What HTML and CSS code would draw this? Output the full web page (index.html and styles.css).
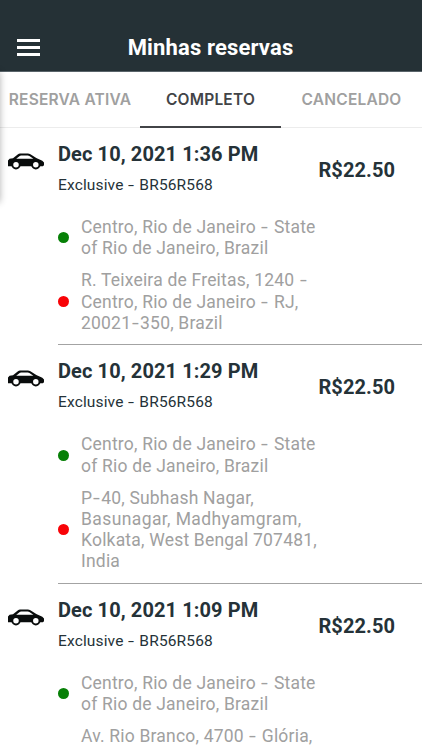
FILE: index.html
```html
<!DOCTYPE html>
<html lang="pt-BR">
<head>
<meta charset="utf-8">
<meta name="viewport" content="width=device-width, initial-scale=1">
<title>Minhas reservas</title>
<link rel="stylesheet" href="styles.css">
</head>
<body>
<svg class="defs" width="0" height="0" aria-hidden="true">
  <symbol id="car" viewBox="0 0 36 17">
    <path d="M0 13.2V7.6L1.6 5.8L5 5.2L10 1.3Q10.8 .6 12 .6H19.8Q21.2 .6 22.4 1.2L28.3 5L34.3 7.7L36 9.6V12.2L34.8 13.2Z" fill="#090c0c"/>
    <path d="M8.2 5.7L11.7 3Q12.3 2.5 13 2.5H19.8Q20.6 2.5 21.4 2.9L25.4 5.7Z" fill="#fff"/>
    <circle cx="8" cy="11.8" r="3.7" fill="#fff" stroke="#090c0c" stroke-width="1.9"/>
    <circle cx="27.8" cy="11.8" r="3.7" fill="#fff" stroke="#090c0c" stroke-width="1.9"/>
  </symbol>
</svg>
<main class="screen">
  <header class="header">
    <button class="menu" aria-label="Menu"><i></i><i></i><i></i></button>
    <h1 class="title">Minhas reservas</h1>
  </header>
  <nav class="tabs">
    <a class="tab">RESERVA ATIVA</a>
    <a class="tab active">COMPLETO</a>
    <a class="tab">CANCELADO</a>
  </nav>
  <section class="list">
    <article class="ride">
      <svg class="car"><use href="#car"/></svg>
      <div class="body">
        <div class="summary">
          <div><h2 class="date">Dec 10, 2021 1:36 PM</h2><p class="plate">Exclusive <span class="dash">-</span> BR56R568</p></div>
          <strong class="price">R$22.50</strong>
        </div>
        <div class="stop"><span class="dot from"></span><p class="address">Centro, Rio de Janeiro <span class="dash">-</span> State<br>of Rio de Janeiro, Brazil</p></div>
        <div class="stop"><span class="dot to"></span><p class="address">R. Teixeira de Freitas, 1240 <span class="dash">-</span><br>Centro, Rio de Janeiro <span class="dash">-</span> RJ,<br>20021<span class="dash">-</span>350, Brazil</p></div>
      </div>
    </article>
    <article class="ride">
      <svg class="car"><use href="#car"/></svg>
      <div class="body">
        <div class="summary">
          <div><h2 class="date">Dec 10, 2021 1:29 PM</h2><p class="plate">Exclusive <span class="dash">-</span> BR56R568</p></div>
          <strong class="price">R$22.50</strong>
        </div>
        <div class="stop"><span class="dot from"></span><p class="address">Centro, Rio de Janeiro <span class="dash">-</span> State<br>of Rio de Janeiro, Brazil</p></div>
        <div class="stop"><span class="dot to"></span><p class="address">P<span class="dash">-</span>40, Subhash Nagar,<br><span class="wide">Basunagar, Madhyamgram,</span><br>Kolkata, West Bengal 707481,<br>India</p></div>
      </div>
    </article>
    <article class="ride">
      <svg class="car"><use href="#car"/></svg>
      <div class="body">
        <div class="summary">
          <div><h2 class="date">Dec 10, 2021 1:09 PM</h2><p class="plate">Exclusive <span class="dash">-</span> BR56R568</p></div>
          <strong class="price">R$22.50</strong>
        </div>
        <div class="stop"><span class="dot from"></span><p class="address">Centro, Rio de Janeiro <span class="dash">-</span> State<br>of Rio de Janeiro, Brazil</p></div>
        <div class="stop last"><p class="address">Av. Rio Branco, 4700 <span class="dash">-</span> Glória,</p></div>
      </div>
    </article>
  </section>
  <div class="drawer-edge"></div>
</main>
</body>
</html>
```
FILE: styles.css
```css
* { box-sizing: border-box; margin: 0; padding: 0; }
body { background: #fff; font-family: Roboto, "Liberation Sans", sans-serif; color: #253238; }
.defs { position: absolute; }
.screen { position: relative; width: 422px; height: 750px; overflow: hidden; background: #fff; }
.header { height: 72px; background: #253136; display: grid; grid-template-columns: 60px 1fr 61px; align-items: start; padding-top: 32px; border-bottom: 1px solid #59646a; }
.menu { border: 0; background: none; display: flex; flex-direction: column; gap: 4px; padding: 7px 0 0 17px; }
.menu i { display: block; width: 23px; height: 3px; background: #fff; }
.title { color: #fff; font-size: 22px; line-height: 32px; font-weight: 700; text-align: center; white-space: nowrap; letter-spacing: .15px; }
.tabs { height: 56px; display: grid; grid-template-columns: 140px 141px 141px; border-bottom: 1px solid #ececec; }
.tab { font: 600 15.5px/56px Inter, sans-serif; text-align: center; color: #a0a0a0; height: 56px; white-space: nowrap; letter-spacing: .2px; }
.tab.active { color: #424447; border-bottom: 2px solid #424447; }
.ride { display: grid; grid-template-columns: 50px 1fr; padding-left: 8px; }
.car { width: 36px; height: 17px; margin-top: 25px; }
.body { border-bottom: 1px solid #a3a3a3; padding-bottom: 10.4px; }
.summary { height: 89px; display: flex; justify-content: space-between; padding-right: 27px; white-space: nowrap; }
.date { font-size: 20px; line-height: 24px; font-weight: 700; padding-top: 14px; letter-spacing: .1px; }
.plate { font-size: 15.5px; line-height: 20px; padding-top: 9px; letter-spacing: .15px; }
.price { font-size: 20px; line-height: 24px; padding-top: 30px; letter-spacing: .08px; }
.stop { display: flex; align-items: center; gap: 12px; white-space: nowrap; }
.stop + .stop { margin-top: 11px; }
.stop.last { padding-left: 23px; }
.dot { width: 11px; height: 11px; border-radius: 50%; margin-bottom: 1px; }
.from { background: #078007; }
.to { background: #f80307; }
.address { font-size: 17.5px; line-height: 21.2px; color: #a0a0a0; letter-spacing: .2px; }
.dash { display: inline-block; line-height: 1; transform: scaleX(1.4); margin: 0 .11em; }
.wide { letter-spacing: .4px; }
.drawer-edge { position: absolute; left: -10px; top: 72px; width: 10px; height: 130px; box-shadow: 0 0 7px rgba(0,0,0,.3); }
```
